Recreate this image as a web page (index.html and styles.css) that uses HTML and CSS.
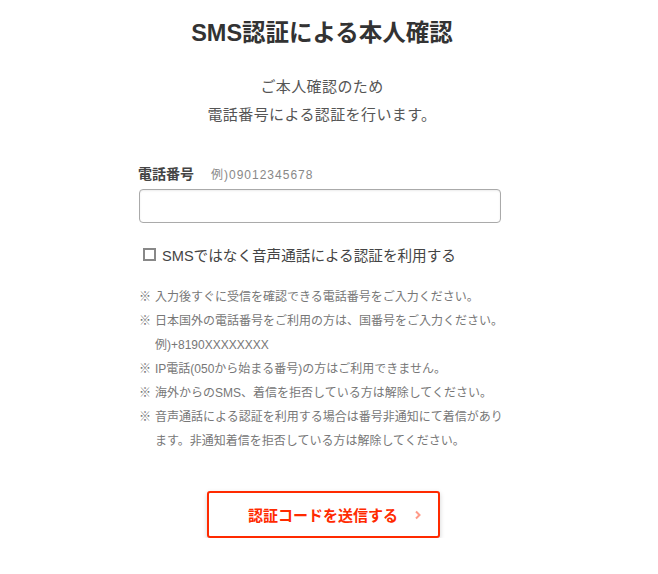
FILE: index.html
```html
<!DOCTYPE html>
<html lang="ja">

<head>
    <meta charset="UTF-8">
    <meta name="viewport" content="width=device-width, initial-scale=1.0">
    <title>SMS認証による本人確認</title>
    <link rel="stylesheet" href="styles.css">
</head>

<body>
    <div class="page">
        <h1 class="page-title">SMS認証による本人確認</h1>
        <p class="page-lead">ご本人確認のため<br>電話番号による認証を行います。</p>

        <form class="auth-form">
            <div class="field-label">
                <span class="label-text">電話番号</span>
                <span class="label-example">例)09012345678</span>
            </div>
            <input class="phone-input" type="tel">

            <label class="voice-option">
                <span class="check-box"></span>
                <span>SMSではなく音声通話による認証を利用する</span>
            </label>

            <ul class="notes">
                <li><span class="mark">※</span><span>入力後すぐに受信を確認できる電話番号をご入力ください。</span></li>
                <li><span class="mark">※</span><span>日本国外の電話番号をご利用の方は、国番号をご入力ください。<br>例)+8190XXXXXXXX</span></li>
                <li><span class="mark">※</span><span>IP電話(050から始まる番号)の方はご利用できません。</span></li>
                <li><span class="mark">※</span><span>海外からのSMS、着信を拒否している方は解除してください。</span></li>
                <li><span class="mark">※</span><span>音声通話による認証を利用する場合は番号非通知にて着信があります。非通知着信を拒否している方は解除してください。</span></li>
            </ul>

            <div class="submit-row">
                <button class="submit-button" type="button">
                    認証コードを送信する
                    <svg class="chevron" width="8" height="10" viewBox="0 0 8 10">
                        <polyline points="2,1.5 5.5,5 2,8.5" fill="none" stroke="#ff9a88" stroke-width="2"/>
                    </svg>
                </button>
            </div>
        </form>
    </div>
</body>

</html>
```

FILE: styles.css
```css
* {
    margin: 0;
    padding: 0;
    box-sizing: border-box;
}

body {
    font-family: "Liberation Sans", "Noto Sans CJK JP", sans-serif;
    color: #555;
    background: #fff;
}

.page {
    width: 644px;
    padding-top: 16px;
    text-align: center;
}

.page-title {
    font-size: 23.5px;
    line-height: 34px;
    font-weight: bold;
    color: #333;
}

.page-lead {
    margin-top: 23px;
    font-size: 15px;
    line-height: 28px;
    letter-spacing: 0.4px;
    color: #555;
}

.auth-form {
    width: 362px;
    margin: 34px 0 0 139px;
    text-align: left;
}

.field-label {
    display: flex;
    align-items: center;
    height: 20px;
    margin-left: -1px;
}

.label-text {
    font-size: 14px;
    font-weight: bold;
    color: #444;
}

.label-example {
    margin-left: 17px;
    font-size: 12px;
    letter-spacing: 1px;
    color: #888;
}

.phone-input {
    display: block;
    width: 362px;
    height: 34px;
    margin-top: 6px;
    border: 1px solid #aaa;
    border-radius: 4px;
    box-shadow: inset 0 1px 2px rgba(0, 0, 0, 0.08);
    font-size: 15px;
    padding: 0 10px;
}

.voice-option {
    display: flex;
    align-items: center;
    height: 24px;
    margin-top: 19px;
    padding-left: 4px;
    font-size: 14.6px;
    color: #444;
    cursor: pointer;
}

.check-box {
    width: 13px;
    height: 13px;
    margin-right: 6px;
    border: 2px solid #888;
    background: #fff;
}

.notes {
    list-style: none;
    margin-top: 19px;
    width: 368px;
    font-size: 12px;
    line-height: 24px;
    color: #777;
}

.notes li {
    display: flex;
}

.notes .mark {
    flex: none;
    width: 16px;
}

.submit-row {
    display: flex;
    justify-content: center;
    margin-top: 38px;
    padding-left: 6px;
}

.submit-button {
    position: relative;
    width: 233px;
    height: 47px;
    border: 2px solid #ff2a00;
    border-radius: 3px;
    background: #fff;
    box-shadow: 0 2px 5px rgba(0, 0, 0, 0.18);
    font-family: "Liberation Sans", "Noto Sans CJK JP", sans-serif;
    font-size: 15px;
    font-weight: bold;
    color: #ff2a00;
    cursor: pointer;
}

.chevron {
    position: absolute;
    right: 16px;
    top: 17px;
}
```
